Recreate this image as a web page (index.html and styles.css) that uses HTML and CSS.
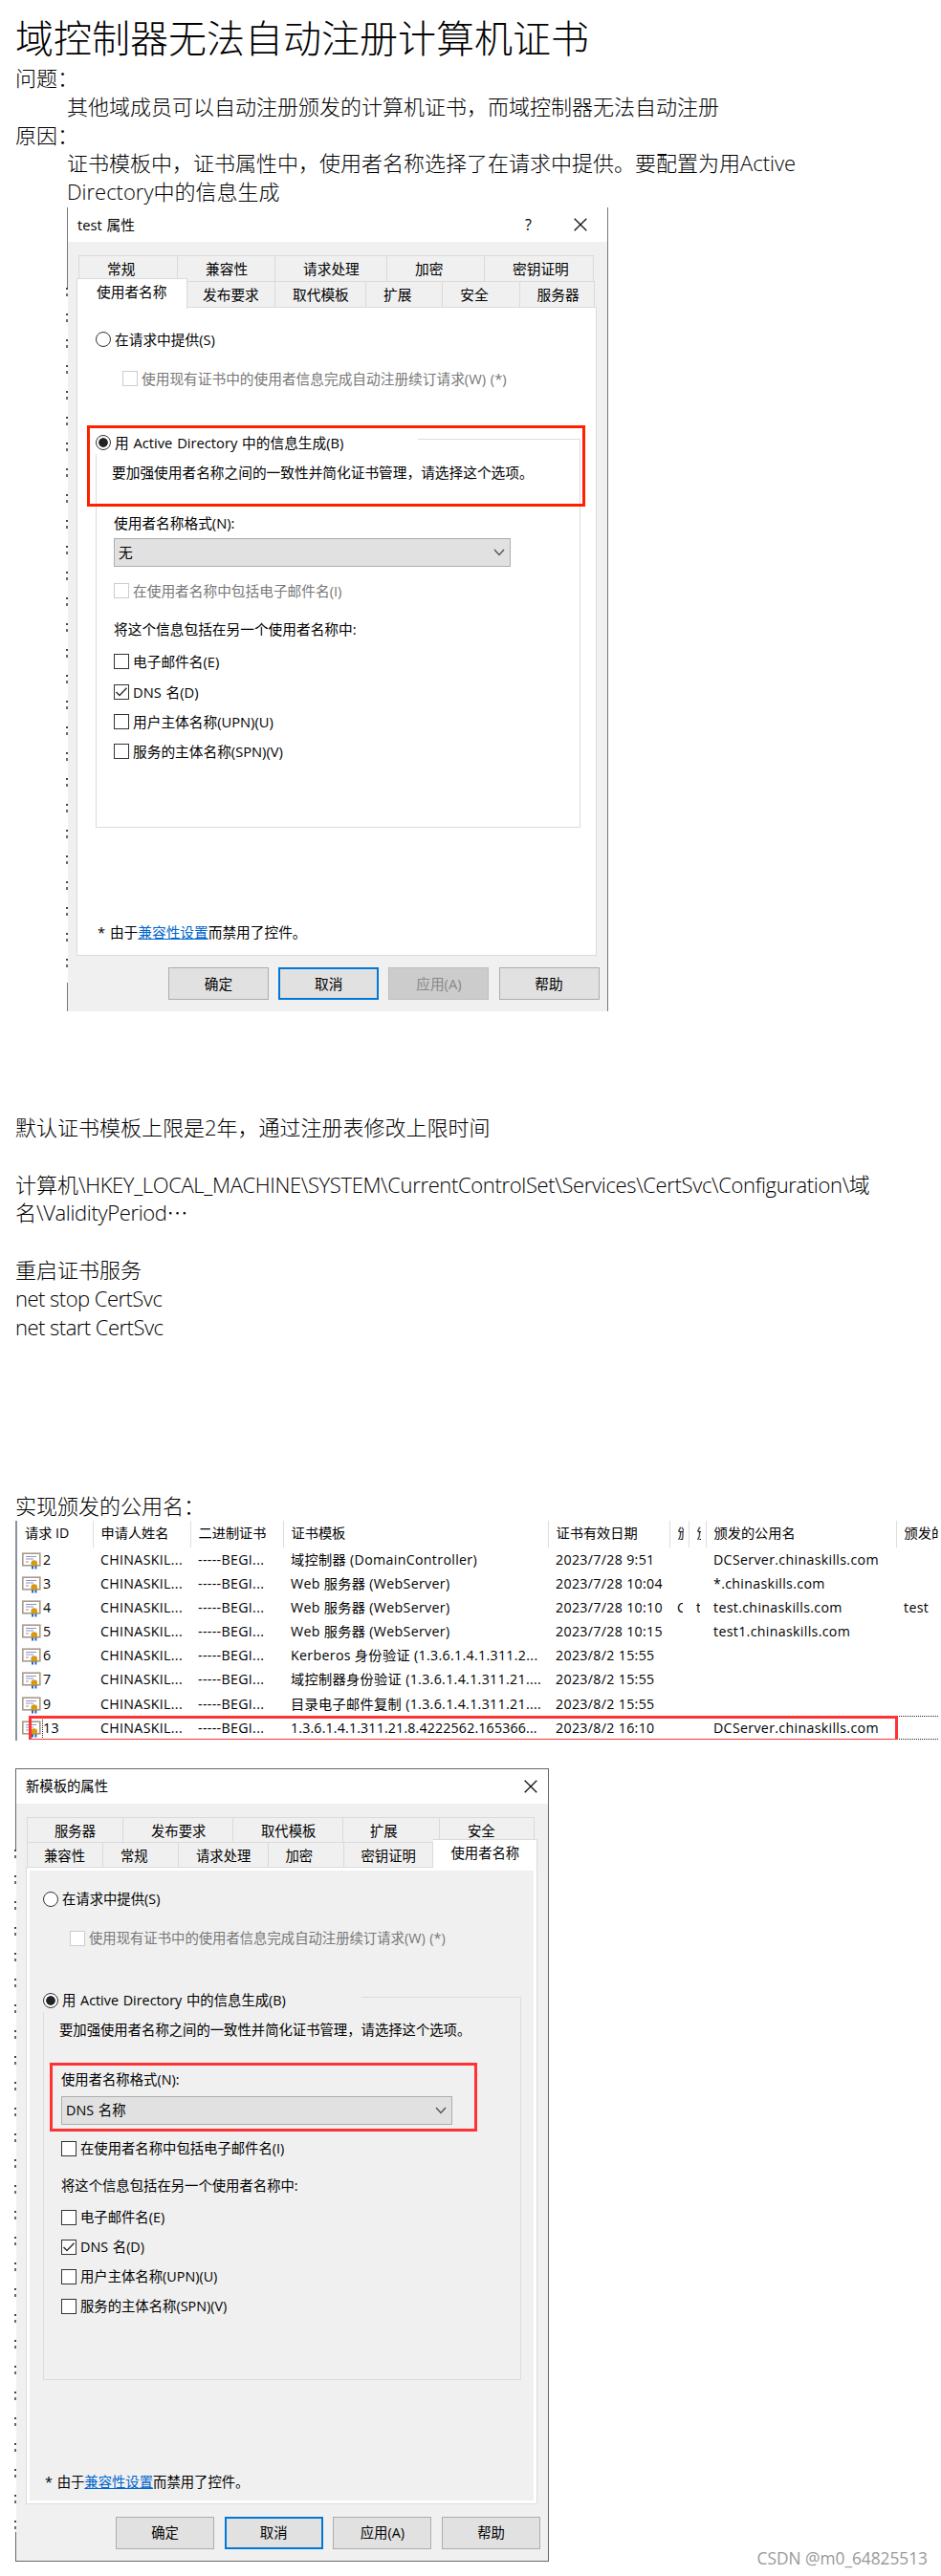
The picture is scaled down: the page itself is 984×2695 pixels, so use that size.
FILE: index.html
```html
<!DOCTYPE html>
<html lang="zh-CN">
<head>
  <meta charset="UTF-8" />
  <meta name="viewport" content="width=device-width,initial-scale=1"/>
  <title>域控制器无法自动注册计算机证书</title>
  <link rel="stylesheet" href="styles.css">
</head>
<body>
  <svg width="0" height="0" class="defs">
    <symbol id="check" viewBox="0 0 14 14"><path d="M1.5 7 L5 10.5 L12.5 2.8" fill="none" stroke="#333" stroke-width="1.5"/></symbol>
    <symbol id="close" viewBox="0 0 14 14"><path d="M0.7 0.7 L13.3 13.3 M13.3 0.7 L0.7 13.3" fill="none" stroke="#111" stroke-width="1.3"/></symbol>
    <symbol id="arrow" viewBox="0 0 12 8"><path d="M1 1 L6 6.4 L11 1" fill="none" stroke="#555" stroke-width="1.4"/></symbol>
    <symbol id="cert" viewBox="0 0 20 18">
      <rect x="0.8" y="1.2" width="18" height="12.6" fill="#fff" stroke="#a89a86" stroke-width="1.6"/>
      <path d="M4 4.5 H15 M4 7 H12 M4 10 H7" stroke="#8b93c9" stroke-width="1"/>
      <path d="M11 13 V17.4 M14.4 13 V17.4" stroke="#2563d8" stroke-width="2"/>
      <circle cx="12.7" cy="11.6" r="3.3" fill="#d69a12"/>
    </symbol>
  </svg>

  <div class="page">
    <h1>域控制器无法自动注册计算机证书</h1>
    <p>问题：</p>
    <p class="indent">其他域成员可以自动注册颁发的计算机证书，而域控制器无法自动注册</p>
    <p>原因：</p>
    <p class="indent">证书模板中，证书属性中，使用者名称选择了在请求中提供。要配置为用Active<br>Directory中的信息生成</p>

    <div class="dialog dialog-test">
      <div class="titlebar">
        <span class="caption">test 属性</span>
        <span class="help">?</span>
        <svg class="close"><use href="#close"/></svg>
      </div>
      <div class="tabs">
        <div class="tab t1">常规</div>
        <div class="tab t2">兼容性</div>
        <div class="tab t3">请求处理</div>
        <div class="tab t4">加密</div>
        <div class="tab t5">密钥证明</div>
      </div>
      <div class="tabs">
        <div class="tab active first">使用者名称</div>
        <div class="tab t6">发布要求</div>
        <div class="tab t7">取代模板</div>
        <div class="tab t8">扩展</div>
        <div class="tab t8">安全</div>
        <div class="tab t9">服务器</div>
      </div>
      <div class="panel">
        <div class="row supply"><span class="radio"></span>在请求中提供(S)</div>
        <div class="row renew disabled"><span class="box"></span>使用现有证书中的使用者信息完成自动注册续订请求(W) (*)</div>
        <div class="group">
          <div class="legend"><span class="radio on"></span>用 Active Directory 中的信息生成(B)</div>
          <div class="row desc">要加强使用者名称之间的一致性并简化证书管理，请选择这个选项。</div>
          <div class="row format">使用者名称格式(N):</div>
          <div class="select">无<svg class="arrow"><use href="#arrow"/></svg></div>
          <div class="row include disabled"><span class="box"></span>在使用者名称中包括电子邮件名(I)</div>
          <div class="row also">将这个信息包括在另一个使用者名称中:</div>
          <div class="row email"><span class="box"></span>电子邮件名(E)</div>
          <div class="row item"><span class="box"><svg><use href="#check"/></svg></span>DNS 名(D)</div>
          <div class="row item"><span class="box"></span>用户主体名称(UPN)(U)</div>
          <div class="row item"><span class="box"></span>服务的主体名称(SPN)(V)</div>
        </div>
        <div class="note">* 由于<a href="#">兼容性设置</a>而禁用了控件。</div>
      </div>
      <div class="buttons">
        <div class="btn">确定</div>
        <div class="btn focus">取消</div>
        <div class="btn off">应用(A)</div>
        <div class="btn">帮助</div>
      </div>
      <div class="mark"></div>
    </div>

    <div class="notes">
      <p>默认证书模板上限是2年，通过注册表修改上限时间</p>
      <p>&nbsp;</p>
      <p>计算机<span class="path">\HKEY_LOCAL_MACHINE\SYSTEM\CurrentControlSet\Services\CertSvc\Configuration\</span>域<br>名<span class="path">\ValidityPeriod</span>⋯</p>
      <p>&nbsp;</p>
      <p>重启证书服务</p>
      <p class="cmd">net stop CertSvc</p>
      <p class="cmd">net start CertSvc</p>
    </div>

    <p class="issued">实现颁发的公用名：</p>
    <div class="list">
      <table>
        <colgroup>
          <col class="c-id"><col class="c-name"><col class="c-bin"><col class="c-tpl"><col class="c-date">
          <col class="c-s1"><col class="c-s2"><col class="c-cn"><col class="c-last">
        </colgroup>
        <tr><th>请求 ID</th><th>申请人姓名</th><th>二进制证书</th><th>证书模板</th><th>证书有效日期</th><th><span class="cut">颁</span></th><th><span class="cut narrow">颁</span></th><th>颁发的公用名</th><th>颁发的</th></tr>
        <tr><td><svg class="cert"><use href="#cert"/></svg>2</td><td>CHINASKIL...</td><td>-----BEGI...</td><td>域控制器 (DomainController)</td><td>2023/7/28 9:51</td><td></td><td></td><td>DCServer.chinaskills.com</td><td></td></tr>
        <tr><td><svg class="cert"><use href="#cert"/></svg>3</td><td>CHINASKIL...</td><td>-----BEGI...</td><td>Web 服务器 (WebServer)</td><td>2023/7/28 10:04</td><td></td><td></td><td>*.chinaskills.com</td><td></td></tr>
        <tr><td><svg class="cert"><use href="#cert"/></svg>4</td><td>CHINASKIL...</td><td>-----BEGI...</td><td>Web 服务器 (WebServer)</td><td>2023/7/28 10:10</td><td><span class="cut">C</span></td><td><span class="cut narrow">t</span></td><td>test.chinaskills.com</td><td>test</td></tr>
        <tr><td><svg class="cert"><use href="#cert"/></svg>5</td><td>CHINASKIL...</td><td>-----BEGI...</td><td>Web 服务器 (WebServer)</td><td>2023/7/28 10:15</td><td></td><td></td><td>test1.chinaskills.com</td><td></td></tr>
        <tr><td><svg class="cert"><use href="#cert"/></svg>6</td><td>CHINASKIL...</td><td>-----BEGI...</td><td>Kerberos 身份验证 (1.3.6.1.4.1.311.2...</td><td>2023/8/2 15:55</td><td></td><td></td><td></td><td></td></tr>
        <tr><td><svg class="cert"><use href="#cert"/></svg>7</td><td>CHINASKIL...</td><td>-----BEGI...</td><td>域控制器身份验证 (1.3.6.1.4.1.311.21....</td><td>2023/8/2 15:55</td><td></td><td></td><td></td><td></td></tr>
        <tr><td><svg class="cert"><use href="#cert"/></svg>9</td><td>CHINASKIL...</td><td>-----BEGI...</td><td>目录电子邮件复制 (1.3.6.1.4.1.311.21....</td><td>2023/8/2 15:55</td><td></td><td></td><td></td><td></td></tr>
        <tr><td><svg class="cert"><use href="#cert"/></svg>13</td><td>CHINASKIL...</td><td>-----BEGI...</td><td class="oid">1.3.6.1.4.1.311.21.8.4222562.165366...</td><td>2023/8/2 16:10</td><td></td><td></td><td>DCServer.chinaskills.com</td><td></td></tr>
      </table>
      <div class="focus-row"></div>
      <div class="mark"></div>
    </div>

    <div class="dialog dialog-new">
      <div class="titlebar">
        <span class="caption">新模板的属性</span>
        <svg class="close"><use href="#close"/></svg>
      </div>
      <div class="tabs">
        <div class="tab n1">服务器</div>
        <div class="tab n2">发布要求</div>
        <div class="tab n2">取代模板</div>
        <div class="tab n1">扩展</div>
        <div class="tab n3">安全</div>
      </div>
      <div class="tabs">
        <div class="tab n4">兼容性</div>
        <div class="tab n5">常规</div>
        <div class="tab n6">请求处理</div>
        <div class="tab n5">加密</div>
        <div class="tab n7">密钥证明</div>
        <div class="tab active last">使用者名称</div>
      </div>
      <div class="panel">
        <div class="row supply"><span class="radio"></span>在请求中提供(S)</div>
        <div class="row renew disabled"><span class="box"></span>使用现有证书中的使用者信息完成自动注册续订请求(W) (*)</div>
        <div class="group">
          <div class="legend"><span class="radio on"></span>用 Active Directory 中的信息生成(B)</div>
          <div class="row desc">要加强使用者名称之间的一致性并简化证书管理，请选择这个选项。</div>
          <div class="row format">使用者名称格式(N):</div>
          <div class="select">DNS 名称<svg class="arrow"><use href="#arrow"/></svg></div>
          <div class="row include"><span class="box"></span>在使用者名称中包括电子邮件名(I)</div>
          <div class="row also">将这个信息包括在另一个使用者名称中:</div>
          <div class="row email"><span class="box"></span>电子邮件名(E)</div>
          <div class="row item"><span class="box"><svg><use href="#check"/></svg></span>DNS 名(D)</div>
          <div class="row item"><span class="box"></span>用户主体名称(UPN)(U)</div>
          <div class="row item"><span class="box"></span>服务的主体名称(SPN)(V)</div>
        </div>
        <div class="note">* 由于<a href="#">兼容性设置</a>而禁用了控件。</div>
      </div>
      <div class="buttons">
        <div class="btn">确定</div>
        <div class="btn focus">取消</div>
        <div class="btn">应用(A)</div>
        <div class="btn">帮助</div>
      </div>
      <div class="mark"></div>
    </div>

    <div class="watermark">CSDN @m0_64825513</div>
  </div>
</body>
</html>
```

FILE: styles.css
```css
* {
  box-sizing: border-box;
}

body {
  margin: 0;
  background: #fff;
  color: #000;
  font-family: "Open Sans", "Noto Sans CJK SC", sans-serif;
}

.defs {
  position: absolute;
}

.page {
  position: relative;
  height: 2695px;
  padding: 13px 3px 0 16px;
  overflow: hidden;
}

h1 {
  margin: 0 0 1px;
  font-size: 40px;
  font-weight: 300;
  line-height: 53px;
}

p {
  margin: 0;
  font-size: 22px;
  font-weight: 300;
  line-height: 29.8px;
  white-space: nowrap;
}

.indent {
  padding-left: 54px;
}

.notes {
  margin-top: 107px;
}

.path {
  letter-spacing: -0.35px;
}

.cmd {
  letter-spacing: -0.52px;
}

.issued {
  margin-top: 158px;
}

/* property dialogs */
.dialog {
  position: relative;
  background: #f0f0f0;
  font-size: 14.7px;
  line-height: 20px;
  word-spacing: 1px;
  white-space: nowrap;
}

/* specks of the window behind, left of the frame */
.dialog::before {
  content: "";
  position: absolute;
  left: -2px;
  top: 84px;
  bottom: 30px;
  width: 2px;
  background: repeating-linear-gradient(#444 0 2px, #fff 2px 6px, #668 6px 9px, #fff 9px 27px);
}

.dialog-test {
  width: 566px;
  height: 841px;
  margin: 1px 0 0 54px;
  border: solid #777;
  border-width: 0 1px;
}

.dialog-new {
  width: 558px;
  height: 830px;
  margin-top: 29px;
  border: 1px solid #666;
  font-size: 14.35px;
}

.titlebar {
  display: flex;
  align-items: center;
  height: 36px;
  padding: 0 21px 0 10px;
  background: #fff;
}

.dialog-new .titlebar {
  padding-right: 11px;
}

.caption {
  flex: 1;
}

.help {
  margin-right: 44px;
  font-size: 16px;
}

.close {
  width: 14px;
  height: 14px;
}

.tabs {
  display: flex;
  height: 27px;
  margin-left: 11px;
}

.titlebar + .tabs {
  margin-top: 14px;
}

.tab {
  border: solid #dadada;
  border-width: 1px 1px 0 0;
  line-height: 27px;
}

.tab:first-child {
  border-left-width: 1px;
}

.t1 { width: 104px; padding-left: 29px; }
.t2 { width: 102px; padding-left: 29px; }
.t3 { width: 117px; padding-left: 29px; }
.t4 { width: 102px; padding-left: 29px; }
.t5 { width: 114px; padding-left: 29px; }
.t6 { width: 92px; padding-left: 16px; }
.t7 { width: 95px; padding-left: 18px; }
.t8 { width: 80.3px; padding-left: 18px; }
.t9 { width: 78px; padding-left: 18px; }

.n1 { width: 101px; padding-left: 28px; }
.n2 { width: 115px; padding-left: 29px; }
.n3 { width: 99px; padding-left: 29px; }
.n4 { width: 80px; padding-left: 17px; }
.n5 { width: 79px; padding-left: 18px; }
.n6 { width: 93.5px; padding-left: 18px; }
.n7 { width: 93px; padding-left: 18px; }

.active {
  position: relative;
  height: 32px;
  margin-top: -3px;
  background: #fff;
}

.active.first {
  width: 116px;
  margin-left: -2px;
  padding-left: 20px;
}

.active.last {
  width: 109px;
  padding-left: 19px;
}

.panel {
  width: 544px;
  height: 679px;
  margin-left: 9px;
  padding: 23px 16px 0 19px;
  border: 1px solid #dadada;
  background: #fff;
}

.row,
.legend {
  display: flex;
  align-items: center;
  height: 20px;
}

.renew {
  margin: 21px 0 0 28px;
}

.disabled {
  color: #777;
}

.radio,
.box {
  flex: none;
  width: 16px;
  height: 16px;
  margin-right: 4px;
  border: 1.4px solid #333;
  background: #fff;
}

.radio {
  border-radius: 50%;
}

.radio.on {
  background: radial-gradient(circle, #222 0 4.4px, #fff 5.2px);
}

.box svg {
  display: block;
  width: 14px;
  height: 14px;
}

.disabled .box {
  border-color: #ccc;
}

.group {
  height: 407px;
  margin-top: 53px;
  padding-left: 18px;
  border: 1px solid #dcdcdc;
}

.legend {
  width: 337px;
  height: 24px;
  margin: -9px 0 0 -19px;
  background: #fff;
}

.desc {
  margin: 9px 0 0 -2px;
}

.format {
  margin-top: 33px;
}

.select {
  display: flex;
  justify-content: space-between;
  align-items: center;
  width: 415px;
  height: 30px;
  margin-top: 6.5px;
  padding: 0 5px 0 4px;
  border: 1px solid #adadad;
  background: #e1e1e1;
}

.arrow {
  width: 12px;
  height: 8px;
}

.include {
  margin-top: 15px;
}

.also {
  margin-top: 20px;
}

.email {
  margin-top: 14px;
}

.item {
  margin-top: 11.3px;
}

.note {
  margin: 99px 0 0 2px;
}

.note a {
  color: #0066cc;
}

.buttons {
  display: flex;
  gap: 10.2px;
  margin: 12px 0 0 105px;
}

.btn {
  width: 105px;
  height: 34px;
  border: 1px solid #adadad;
  background: #e1e1e1;
  line-height: 32px;
  text-align: center;
}

.btn.focus {
  border: 2px solid #0078d7;
  line-height: 30px;
}

.btn.off {
  border-color: #bfbfbf;
  background: #ccc;
  color: #888;
}

/* red highlight drawn over the content */
.mark {
  position: absolute;
  border: 3px solid #ff2000;
}

.dialog-test .mark {
  left: 20px;
  top: 228px;
  width: 521px;
  height: 85px;
}

/* second dialog is slightly smaller and has a grey page */
.dialog-new .tabs {
  height: 26px;
}

.dialog-new .panel {
  width: 535px;
  height: 667px;
  margin-left: 10px;
  padding: 23px 13px 0 14px;
  border-color: #dcdcdc;
  background: #f0f0f0;
  box-shadow: inset 0 0 0 3px #fff;
}

.dialog-new .supply {
  margin-left: 3px;
}

.dialog-new .renew {
  margin-left: 31px;
}

.dialog-new .group {
  width: 500px;
  height: 401px;
  margin: 51px 0 0 3px;
}

.dialog-new .legend {
  width: 333px;
  background: #f0f0f0;
}

.dialog-new .format {
  margin-top: 32px;
}

.dialog-new .select {
  width: 409px;
}

.dialog-new .also {
  margin-top: 19px;
}

.dialog-new .email {
  margin-top: 13.5px;
}

.dialog-new .item {
  margin-top: 10.8px;
}

.dialog-new .note {
  margin: 97px 0 0 5px;
}

.dialog-new .buttons {
  gap: 10.7px;
  margin: 13px 0 0 104px;
}

.dialog-new .btn {
  width: 103px;
}

.dialog-new .mark {
  left: 35px;
  top: 307px;
  width: 447px;
  height: 72px;
  border-color: #ff3333;
}

/* issued certificates */
.list {
  position: relative;
  height: 230px;
  border-left: 2px solid #8c919c;
  overflow: hidden;
}

.list table {
  width: 963px;
  border-collapse: collapse;
  table-layout: fixed;
  font-size: 14.2px;
  line-height: 20px;
  white-space: nowrap;
}

.c-id { width: 79px; }
.c-name { width: 102px; }
.c-bin { width: 97px; }
.c-tpl { width: 277px; }
.c-date { width: 127px; }
.c-s1 { width: 20px; }
.c-s2 { width: 18px; }
.c-cn { width: 199px; }
.c-last { width: 44px; }

.list th {
  height: 28px;
  padding: 0 0 2px 8px;
  border-right: 1px solid #dedede;
  font-weight: 400;
  text-align: left;
  overflow: hidden;
}

.list th:last-child {
  border-right: 0;
}

.list td {
  height: 25.15px;
  padding: 0 0 0 8px;
  letter-spacing: 0.33px;
}

.list td:first-child {
  padding-left: 5px;
}

.list .oid {
  letter-spacing: 0.17px;
}

.cert {
  width: 20px;
  height: 18px;
  margin-right: 2px;
  vertical-align: -5px;
}

.cut {
  display: block;
  width: 6px;
  overflow: hidden;
}

.cut.narrow {
  width: 4px;
}

.focus-row {
  position: absolute;
  left: 26px;
  right: 0;
  top: 204px;
  height: 25px;
  border: 1px dotted #222;
  border-right: 0;
}

.list .mark {
  left: 12px;
  top: 204px;
  width: 909px;
  height: 25px;
  border-color: #ff3333;
  border-bottom-width: 1px;
}

.watermark {
  position: absolute;
  right: 14px;
  bottom: 6px;
  color: #999;
  font-size: 17.3px;
  line-height: 24px;
}
```
